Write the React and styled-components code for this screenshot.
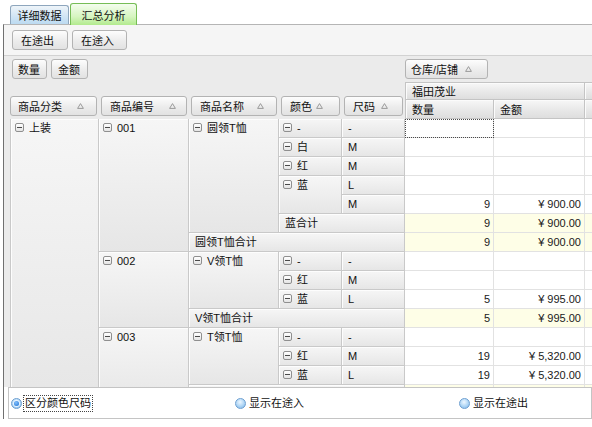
import React from 'react';
import styled, { createGlobalStyle, css } from 'styled-components';

const Global = createGlobalStyle`
  html, body { margin: 0; padding: 0; background: #ffffff; }
  body {
    font-family: "Liberation Sans", "Noto Sans CJK SC", sans-serif;
    font-size: 11px;
    color: #111111;
  }
  * { box-sizing: border-box; }
`;

const Page = styled.div`
  width: 592px;
  height: 427px;
  overflow: hidden;
  display: flex;
  flex-direction: column;
`;

const TabBar = styled.div`
  height: 24px;
  display: flex;
  align-items: flex-end;
  gap: 1px;
  padding-left: 10px;
  position: relative;
  z-index: 1;
`;

const Tab = styled.div`
  display: flex;
  align-items: center;
  justify-content: center;
  width: ${(p) => p.$w}px;
  height: 19px;
  border: 1px solid #8ea6bd;
  border-bottom: none;
  border-radius: 3px 3px 0 0;
  background: linear-gradient(#eef4f9, #bcdaf1);
  color: #111;
  ${(p) =>
    p.$active &&
    css`
      height: 22px;
      margin-bottom: -1px;
      border-color: #76bd56;
      background: linear-gradient(#f4fdee, #d6f5c0 60%, #b2ea8e);
    `}
`;

const Panel = styled.div`
  margin-left: 3px;
  border-left: 1px solid #707070;
  border-top: 1px solid #b5b5b5;
  display: flex;
  flex-direction: column;
`;

const Toolbar = styled.div`
  height: 31px;
  display: flex;
  align-items: flex-start;
  gap: 4px;
  padding: 5px 0 0 8px;
  background: #f5f5f5;
  border-bottom: 1px solid #d2d2d2;
`;

const Button = styled.div`
  height: 20px;
  width: ${(p) => (p.$w ? `${p.$w}px` : 'auto')};
  display: flex;
  align-items: center;
  gap: ${(p) => p.$gap ?? 6}px;
  padding: 0 0 0 ${(p) => p.$pl ?? 7}px;
  border: 1px solid #b3b3b3;
  border-radius: 3px;
  background: linear-gradient(#fdfdfd, #ececec 55%, #e2e2e2);
  color: #111;
  white-space: nowrap;
`;

const Label = styled.span`
  display: inline-block;
  min-width: ${(p) => p.$min ?? 0}px;
`;

const PivotArea = styled.div`
  height: 331px;
  overflow: hidden;
  background: #ebebeb;
  padding-left: 6px;
`;

const PivotGrid = styled.div`
  display: grid;
  grid-template-columns: 89px 90px 90px 63px 63px 89px 91px 91px;
  grid-template-rows: 26px 18px 19px repeat(15, 19px);
  width: max-content;
`;

const DataFieldZone = styled.div`
  grid-column: 1 / 6;
  grid-row: 1;
  display: flex;
  gap: 4px;
  padding: 3px 0 0 2px;
`;

const ColumnFieldZone = styled.div`
  grid-column: 6 / 9;
  grid-row: 1;
  display: flex;
  padding-top: 3px;
`;

const RowFieldSlot = styled.div`
  grid-column: ${(p) => p.$col};
  grid-row: 2 / 4;
  align-self: end;
  margin: 0 2px 3px ${(p) => (p.$col === 1 ? 0 : 2)}px;
`;

const ColHeader = styled.div`
  grid-column: ${(p) => p.$col};
  grid-row: ${(p) => p.$row};
  display: flex;
  align-items: center;
  padding-left: 6px;
  background: linear-gradient(#f7f7f7, #e7e7e7 60%, #dedede);
  border-right: 1px solid #c4c4c4;
  border-bottom: 1px solid #c4c4c4;
  ${(p) => p.$row === 2 && css`border-top: 1px solid #c4c4c4;`}
  ${(p) => p.$first && css`border-left: 1px solid #c4c4c4;`}
  box-shadow: inset 1px 1px 0 #fbfbfb;
  white-space: nowrap;
  overflow: hidden;
`;

const RowHead = styled.div`
  grid-row: ${(p) => p.$r + 4} / span ${(p) => p.$rs || 1};
  grid-column: ${(p) => p.$c} / span ${(p) => p.$cs || 1};
  display: flex;
  align-items: flex-start;
  gap: 5px;
  padding-left: ${(p) => (p.$icon ? 4 : 6)}px;
  line-height: 18px;
  background: linear-gradient(#f6f6f6, #ebebeb 70%, #e6e6e6);
  border-right: 1px solid #c9c9c9;
  border-bottom: 1px solid #c9c9c9;
  ${(p) => p.$c === 1 && css`border-left: 1px solid #c9c9c9;`}
  box-shadow: inset 1px 1px 0 #fdfdfd;
  color: #111;
  white-space: nowrap;
`;

const Expander = styled.span`
  position: relative;
  flex: none;
  width: 9px;
  height: 9px;
  margin-top: 4px;
  border: 1px solid #8f8f8f;
  border-radius: 2px;
  background: linear-gradient(#ffffff, #e4e4e4);
  &::after {
    content: '';
    position: absolute;
    left: 1px;
    right: 1px;
    top: 3px;
    height: 1px;
    background: #4a4a4a;
  }
`;

const DataCell = styled.div`
  grid-row: ${(p) => p.$r + 4};
  grid-column: ${(p) => p.$c};
  background: ${(p) => (p.$total ? '#fefee7' : '#ffffff')};
  border-right: 1px solid #e2e2e2;
  border-bottom: 1px solid #e2e2e2;
  text-align: right;
  padding-right: 3px;
  line-height: 18px;
  color: #1a1a1a;
  white-space: nowrap;
  ${(p) =>
    p.$focus &&
    css`
      outline: 1px dotted #4a4a4a;
      outline-offset: -1px;
    `}
`;

const RadioBar = styled.div`
  height: 32px;
  margin-left: 4px;
  border: 1px solid #c4c4c4;
  background: #ffffff;
  display: grid;
  grid-template-columns: repeat(3, 224px);
  align-items: center;
  padding-left: 2px;
`;

const RadioItem = styled.label`
  display: flex;
  align-items: center;
  gap: 2px;
  color: #111;
`;

const RadioDot = styled.span`
  position: relative;
  flex: none;
  width: 11px;
  height: 11px;
  border-radius: 50%;
  border: 1px solid #6d9fd1;
  background: radial-gradient(circle at 45% 35%, #eef7ff 0%, #b9dbf7 45%, #79b4e8 100%);
  ${(p) =>
    p.$checked &&
    css`
      &::after {
        content: '';
        position: absolute;
        left: 2px;
        top: 2px;
        width: 5px;
        height: 5px;
        border-radius: 50%;
        background: radial-gradient(circle at 40% 35%, #7fc0ff, #1f6fcf);
        box-shadow: 0 0 0 1px #e6f3ff;
      }
    `}
`;

const RadioText = styled.span`
  line-height: 15px;
  padding: 0 1px;
  ${(p) => p.$focus && css`outline: 1px dotted #444;`}
`;

const SortMark = () => (
  <svg width="7" height="6" viewBox="0 0 7 6" style={{ flex: 'none' }}>
    <path d="M3.5 0.6 L6.4 5.4 L0.6 5.4 Z" fill="none" stroke="#9a9a9a" strokeWidth="1" />
  </svg>
);

const rowFields = [
  { col: 1, text: '商品分类', min: 59 },
  { col: 2, text: '商品编号', min: 59 },
  { col: 3, text: '商品名称', min: 57 },
  { col: 4, text: '颜色', min: 26 },
  { col: 5, text: '尺码', min: 28 },
];

const rowHeads = [
  { r: 0, c: 1, rs: 15, text: '上装', icon: true },
  { r: 0, c: 2, rs: 7, text: '001', icon: true },
  { r: 7, c: 2, rs: 4, text: '002', icon: true },
  { r: 11, c: 2, rs: 4, text: '003', icon: true },
  { r: 0, c: 3, rs: 6, text: '圆领T恤', icon: true },
  { r: 6, c: 3, cs: 3, text: '圆领T恤合计' },
  { r: 7, c: 3, rs: 3, text: 'V领T恤', icon: true },
  { r: 10, c: 3, cs: 3, text: 'V领T恤合计' },
  { r: 11, c: 3, rs: 3, text: 'T领T恤', icon: true },
  { r: 14, c: 3, cs: 3, text: '' },
  { r: 0, c: 4, text: '-', icon: true },
  { r: 1, c: 4, text: '白', icon: true },
  { r: 2, c: 4, text: '红', icon: true },
  { r: 3, c: 4, rs: 2, text: '蓝', icon: true },
  { r: 5, c: 4, cs: 2, text: '蓝合计' },
  { r: 7, c: 4, text: '-', icon: true },
  { r: 8, c: 4, text: '红', icon: true },
  { r: 9, c: 4, text: '蓝', icon: true },
  { r: 11, c: 4, text: '-', icon: true },
  { r: 12, c: 4, text: '红', icon: true },
  { r: 13, c: 4, text: '蓝', icon: true },
  { r: 0, c: 5, text: '-' },
  { r: 1, c: 5, text: 'M' },
  { r: 2, c: 5, text: 'M' },
  { r: 3, c: 5, text: 'L' },
  { r: 4, c: 5, text: 'M' },
  { r: 7, c: 5, text: '-' },
  { r: 8, c: 5, text: 'M' },
  { r: 9, c: 5, text: 'L' },
  { r: 11, c: 5, text: '-' },
  { r: 12, c: 5, text: 'M' },
  { r: 13, c: 5, text: 'L' },
];

const totals = new Set([5, 6, 10, 14]);
const values = {
  4: ['9', '¥ 900.00'],
  5: ['9', '¥ 900.00'],
  6: ['9', '¥ 900.00'],
  9: ['5', '¥ 995.00'],
  10: ['5', '¥ 995.00'],
  12: ['19', '¥ 5,320.00'],
  13: ['19', '¥ 5,320.00'],
};

export default function App() {
  const dataCells = [];
  for (let r = 0; r < 15; r++) {
    const v = values[r] || ['', ''];
    [6, 7, 8].forEach((c, i) => {
      dataCells.push(
        <DataCell key={`${r}-${c}`} $r={r} $c={c} $total={totals.has(r)} $focus={r === 0 && c === 6}>
          {i < 2 ? v[i] : ''}
        </DataCell>
      );
    });
  }

  return (
    <>
      <Global />
      <Page>
        <TabBar>
          <Tab $w={59}>详细数据</Tab>
          <Tab $w={67} $active>汇总分析</Tab>
        </TabBar>
        <Panel>
          <Toolbar>
            <Button $w={56} $pl={8}>在途出</Button>
            <Button $w={55} $pl={8}>在途入</Button>
          </Toolbar>
          <PivotArea>
            <PivotGrid>
              <DataFieldZone>
                <Button $w={35} $pl={5}>数量</Button>
                <Button $w={37} $pl={6}>金额</Button>
              </DataFieldZone>
              <ColumnFieldZone>
                <Button $w={83} $pl={5} $gap={7}>
                  <Label>仓库/店铺</Label>
                  <SortMark />
                </Button>
              </ColumnFieldZone>
              {rowFields.map((f) => (
                <RowFieldSlot key={f.col} $col={f.col}>
                  <Button $pl={f.col === 1 ? 7 : 8} $gap={0}>
                    <Label $min={f.min}>{f.text}</Label>
                    <SortMark />
                  </Button>
                </RowFieldSlot>
              ))}
              <ColHeader $col="6 / 8" $row={2} $first>福田茂业</ColHeader>
              <ColHeader $col="8" $row={2} />
              <ColHeader $col="6" $row={3} $first>数量</ColHeader>
              <ColHeader $col="7" $row={3}>金额</ColHeader>
              <ColHeader $col="8" $row={3} />
              {rowHeads.map((h, i) => (
                <RowHead key={i} $r={h.r} $c={h.c} $rs={h.rs} $cs={h.cs} $icon={h.icon}>
                  {h.icon && <Expander />}
                  {h.text && <span>{h.text}</span>}
                </RowHead>
              ))}
              {dataCells}
            </PivotGrid>
          </PivotArea>
          <RadioBar>
            <RadioItem>
              <RadioDot $checked />
              <RadioText $focus>区分颜色尺码</RadioText>
            </RadioItem>
            <RadioItem>
              <RadioDot />
              <RadioText>显示在途入</RadioText>
            </RadioItem>
            <RadioItem>
              <RadioDot />
              <RadioText>显示在途出</RadioText>
            </RadioItem>
          </RadioBar>
        </Panel>
      </Page>
    </>
  );
}
